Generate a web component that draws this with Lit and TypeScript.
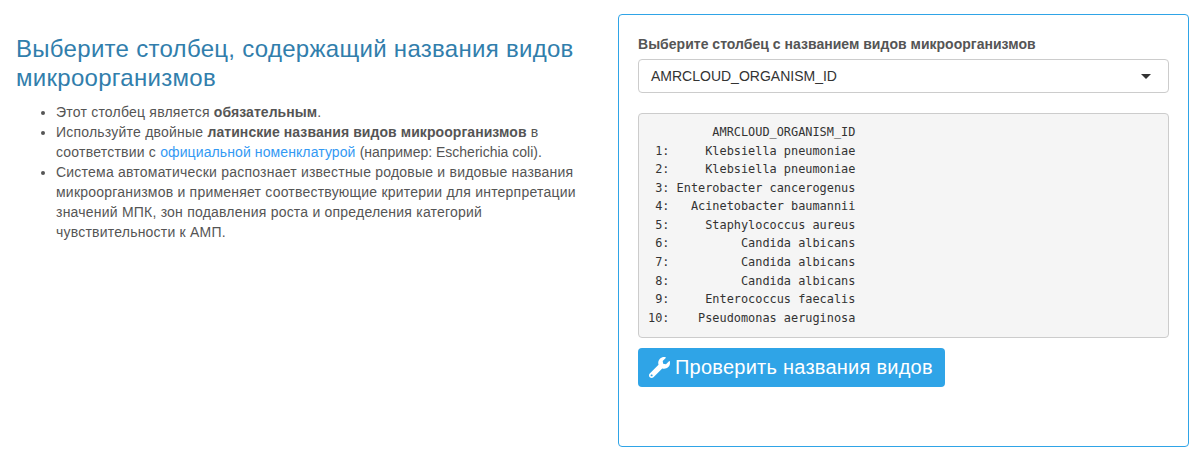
import { LitElement, html, css } from "lit";
import { customElement } from "lit/decorators.js";

const COLUMN = "AMRCLOUD_ORGANISM_ID";
const SPECIES = [
  "Klebsiella pneumoniae",
  "Klebsiella pneumoniae",
  "Enterobacter cancerogenus",
  "Acinetobacter baumannii",
  "Staphylococcus aureus",
  "Candida albicans",
  "Candida albicans",
  "Candida albicans",
  "Enterococcus faecalis",
  "Pseudomonas aeruginosa",
];

const preview = [
  " ".repeat(4) + COLUMN.padStart(25),
  ...SPECIES.map((s, i) => `${i + 1}:`.padStart(3) + " " + s.padStart(25)),
].join("\n");

@customElement("app-root")
export class AppRoot extends LitElement {
  static styles = css`
    :host {
      display: grid;
      grid-template-columns: 602px 571px;
      box-sizing: border-box;
      height: 461px;
      padding: 14px 15px 14px 16px;
      background: #fff;
      color: #555;
      font: 14px/20px "Liberation Sans", Arial, sans-serif;
    }
    * {
      box-sizing: border-box;
    }
    .intro {
      padding: 20px 20px 0 0;
    }
    h3 {
      margin: 0 0 10px;
      font-size: 24px;
      line-height: 29px;
      font-weight: 400;
      letter-spacing: 0.29px;
      color: #317eac;
    }
    ul {
      margin: 0;
      padding-left: 40px;
      letter-spacing: 0.215px;
      white-space: nowrap;
    }
    b {
      letter-spacing: 0.07px;
    }
    .latin {
      letter-spacing: 0;
    }
    .line {
      display: block;
      width: max-content;
      white-space: nowrap;
    }
    a {
      letter-spacing: 0.1px;
      color: #3399f3;
      text-decoration: none;
    }
    .panel {
      height: 433px;
      padding: 19px;
      border: 1px solid #2fa4e7;
      border-radius: 4px;
    }
    label {
      display: block;
      height: 20px;
      margin-bottom: 5px;
      font-weight: 700;
      letter-spacing: 0.02px;
      white-space: nowrap;
    }
    .select {
      display: flex;
      align-items: center;
      justify-content: space-between;
      height: 34px;
      padding: 0 17px 0 12px;
      border: 1px solid #ccc;
      border-radius: 4px;
      color: #333;
    }
    .caret {
      border: 5px solid transparent;
      border-top-color: #333;
      border-bottom: 0;
    }
    pre {
      height: 225px;
      margin: 20px 0 10px;
      padding: 9px 9px;
      border: 1px solid #ccc;
      border-radius: 4px;
      background: #f5f5f5;
      color: #333;
      font: 11.88px/18.57px "DejaVu Sans Mono", monospace;
    }
    button {
      display: flex;
      align-items: center;
      gap: 5px;
      width: 307px;
      height: 39px;
      padding: 0 0 0 11px;
      border: 0;
      border-radius: 4px;
      background: #2fa4e7;
      color: #fff;
      font: 20px/27px "Liberation Sans", Arial, sans-serif;
      letter-spacing: 0.24px;
      white-space: nowrap;
    }
    svg {
      width: 21px;
      height: 21px;
      flex: none;
    }
  `;

  render() {
    return html`
      <section class="intro">
        <h3>
          <span class="line">Выберите столбец, содержащий названия видов</span>
          <span class="line">микроорганизмов</span>
        </h3>
        <ul>
          <li>Этот столбец является <b>обязательным</b>.</li>
          <li>
            Используйте двойные <b>латинские названия видов микроорганизмов</b> в<br />
            соответствии с <a>официальной номенклатурой</a>
            <span class="latin">(например: Escherichia coli).</span>
          </li>
          <li>
            Система автоматически распознает известные родовые и видовые названия<br />
            микроорганизмов и применяет соотвествующие критерии для интерпретации<br />
            значений МПК, зон подавления роста и определения категорий<br />
            чувствительности к АМП.
          </li>
        </ul>
      </section>
      <section class="panel">
        <label>Выберите столбец с названием видов микроорганизмов</label>
        <div class="select"><span>${COLUMN}</span><i class="caret"></i></div>
        <pre>${preview}</pre>
        <button>
          <svg viewBox="0 0 512 512" fill="currentColor">
            <path d="M507.73 109.1c-2.24-9.03-13.54-12.09-20.12-5.51l-74.36 74.36-67.88-11.31-11.31-67.88 74.36-74.36c6.62-6.62 3.43-17.9-5.66-20.16-47.38-11.74-99.55.91-136.58 37.93-39.64 39.64-50.55 97.1-34.05 147.2L18.74 402.76c-24.99 24.99-24.99 65.51 0 90.5 24.99 24.99 65.51 24.99 90.5 0l213.21-213.21c50.12 16.71 107.47 5.68 147.37-34.22 37.07-37.07 49.7-89.32 37.91-136.73zM64 472c-13.25 0-24-10.75-24-24 0-13.26 10.75-24 24-24s24 10.74 24 24c0 13.25-10.75 24-24 24z" />
          </svg>
          <span>Проверить названия видов</span>
        </button>
      </section>
    `;
  }
}
